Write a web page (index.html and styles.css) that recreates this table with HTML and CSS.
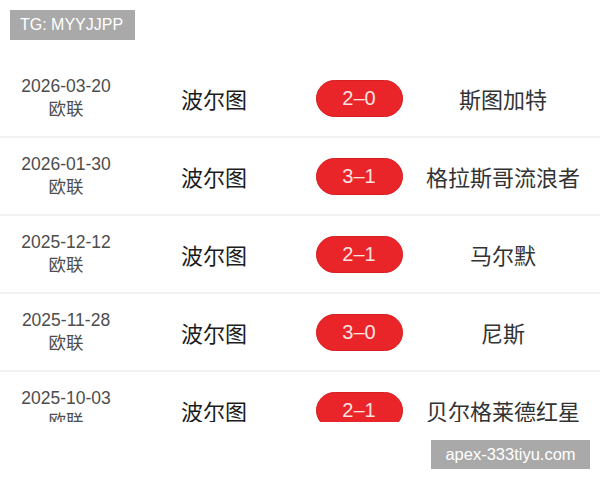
FILE: index.html
```html
<!DOCTYPE html>
<html lang="zh">

<head>
    <meta charset="UTF-8">
    <meta name="viewport" content="width=device-width, initial-scale=1.0">
    <title>波尔图 近期比赛</title>
    <link rel="stylesheet" href="styles.css">
</head>

<body>
    <div class="tag">TG: MYYJJPP</div>

    <div class="list">
        <div class="row">
            <div class="info">
                <span class="date">2026-03-20</span>
                <span class="league">欧联</span>
            </div>
            <div class="home">波尔图</div>
            <div class="score"><span class="pill">2–0</span></div>
            <div class="away">斯图加特</div>
        </div>
        <div class="row">
            <div class="info">
                <span class="date">2026-01-30</span>
                <span class="league">欧联</span>
            </div>
            <div class="home">波尔图</div>
            <div class="score"><span class="pill">3–1</span></div>
            <div class="away">格拉斯哥流浪者</div>
        </div>
        <div class="row">
            <div class="info">
                <span class="date">2025-12-12</span>
                <span class="league">欧联</span>
            </div>
            <div class="home">波尔图</div>
            <div class="score"><span class="pill">2–1</span></div>
            <div class="away">马尔默</div>
        </div>
        <div class="row">
            <div class="info">
                <span class="date">2025-11-28</span>
                <span class="league">欧联</span>
            </div>
            <div class="home">波尔图</div>
            <div class="score"><span class="pill">3–0</span></div>
            <div class="away">尼斯</div>
        </div>
        <div class="row">
            <div class="info">
                <span class="date">2025-10-03</span>
                <span class="league">欧联</span>
            </div>
            <div class="home">波尔图</div>
            <div class="score"><span class="pill">2–1</span></div>
            <div class="away">贝尔格莱德红星</div>
        </div>
    </div>

    <div class="site">apex-333tiyu.com</div>
</body>

</html>
```

FILE: styles.css
```css
* {
    margin: 0;
    padding: 0;
    box-sizing: border-box;
}

html,
body {
    width: 100%;
    height: 100%;
    background-color: #ffffff;
    font-family: "Liberation Sans", "Noto Sans CJK SC", sans-serif;
}

body {
    position: relative;
    overflow: hidden;
    padding-top: 60px;
}

.tag {
    position: absolute;
    top: 10px;
    left: 10px;
    width: 125px;
    height: 30px;
    line-height: 30px;
    padding-left: 10px;
    background-color: #a9a9a9;
    color: #ffffff;
    font-size: 16px;
}

.list {
    height: 362px;
    overflow: hidden;
}

.row {
    display: grid;
    grid-template-columns: 132px 164px 126px 162px;
    align-items: center;
    height: 78px;
    border-bottom: 2px solid #f2f2f2;
}

.info {
    display: flex;
    flex-direction: column;
    align-items: center;
    color: #4d4d4d;
    font-size: 17.5px;
    line-height: 23px;
}

.home {
    text-align: center;
    font-family: "Noto Sans CJK SC", sans-serif;
    font-size: 22px;
    color: #1c1c1c;
}

.score {
    display: flex;
    justify-content: center;
}

.pill {
    display: block;
    width: 87px;
    height: 37px;
    line-height: 35px;
    text-align: center;
    border-radius: 19px;
    background-color: #ea2529;
    border: 1px solid #d81d22;
    color: #fde3e1;
    font-size: 20px;
}

.away {
    text-align: center;
    font-family: "Noto Sans CJK SC", sans-serif;
    font-size: 22px;
    color: #333333;
    white-space: nowrap;
}

.site {
    position: absolute;
    top: 440px;
    left: 431px;
    width: 159px;
    height: 29px;
    line-height: 29px;
    text-align: center;
    background-color: #a9a9a9;
    color: #ffffff;
    font-size: 16.5px;
}
```
